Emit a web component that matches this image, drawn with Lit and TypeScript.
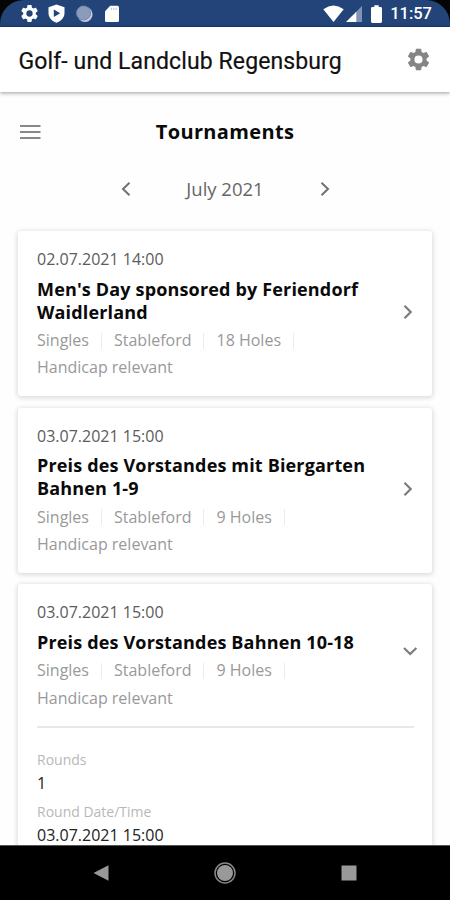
import { LitElement, html, css, svg, nothing } from "lit";
import { customElement, property } from "lit/decorators.js";

interface Detail {
  label: string;
  value: string;
}
interface Tournament {
  date: string;
  title: string;
  tags: string[];
  details?: Detail[];
}

const TOURNAMENTS: Tournament[] = [
  {
    date: "02.07.2021 14:00",
    title: "Men's Day sponsored by Feriendorf Waidlerland",
    tags: ["Singles", "Stableford", "18 Holes", "Handicap relevant"],
  },
  {
    date: "03.07.2021 15:00",
    title: "Preis des Vorstandes mit Biergarten Bahnen 1-9",
    tags: ["Singles", "Stableford", "9 Holes", "Handicap relevant"],
  },
  {
    date: "03.07.2021 15:00",
    title: "Preis des Vorstandes Bahnen 10-18",
    tags: ["Singles", "Stableford", "9 Holes", "Handicap relevant"],
    details: [
      { label: "Rounds", value: "1" },
      { label: "Round Date/Time", value: "03.07.2021 15:00" },
    ],
  },
];

const gear = svg`<path fill="currentColor" fill-rule="evenodd" d="M19.14 12.94c.04-.3.06-.61.06-.94 0-.32-.02-.64-.07-.94l2.03-1.58c.18-.14.23-.41.12-.61l-1.92-3.32c-.12-.22-.37-.29-.59-.22l-2.39.96c-.5-.38-1.03-.7-1.62-.94l-.36-2.54c-.04-.24-.24-.41-.48-.41h-3.84c-.24 0-.43.17-.47.41l-.36 2.54c-.59.24-1.13.57-1.62.94l-2.39-.96c-.22-.08-.47 0-.59.22L2.74 8.87c-.12.21-.08.47.12.61l2.03 1.58c-.05.3-.09.63-.09.94s.02.64.07.94l-2.03 1.58c-.18.14-.23.41-.12.61l1.92 3.32c.12.22.37.29.59.22l2.39-.96c.5.38 1.03.7 1.62.94l.36 2.54c.05.24.24.41.48.41h3.84c.24 0 .44-.17.47-.41l.36-2.54c.59-.24 1.13-.56 1.62-.94l2.39.96c.22.08.47 0 .59-.22l1.92-3.32c.12-.22.07-.47-.12-.61l-2.01-1.58zM12 15.6A3.6 3.6 0 1 1 12 8.4a3.6 3.6 0 0 1 0 7.2z"/>`;

@customElement("status-bar")
export class StatusBar extends LitElement {
  static styles = css`
    :host { display: block; background: #050505; flex: none; }
    .bar {
      height: 27px; box-sizing: border-box; background: #234479; color: #fff;
      border-radius: 24px 24px 0 0; border-bottom: 1px solid #1b3a72;
      display: flex; align-items: center; padding: 1px 18px 0 19px;
    }
    svg { display: block; flex: none; }
    .left { display: flex; align-items: center; gap: 9px; }
    .right { display: flex; align-items: center; margin-left: auto; }
    .shield { margin-left: -1px; }
    .moon { margin-left: 1px; }
    .card { margin-left: 1px; }
    .signal { margin-left: 2px; }
    .battery { margin-left: 9px; }
    .time { font: 500 16.5px/20px Roboto, sans-serif; margin-left: 8px; padding-top: 1px; }
  `;
  render() {
    return html`<div class="bar">
      <div class="left">
        <svg width="21" height="21" viewBox="0 0 24 24">${gear}</svg>
        <svg class="shield" width="17" height="19" viewBox="0 0 17 19">
          <path fill="#fff" fill-rule="evenodd" d="M8.5 0.5 L16.5 3.3 V9 C16.5 13.5 13 17.5 8.5 18.7 C4 17.5 0.5 13.5 0.5 9 V3.3 Z M5.8 5.5 V13 L12.2 9.2 Z"/>
        </svg>
        <svg class="moon" width="19" height="18" viewBox="0 0 19 18">
          <circle cx="10" cy="9.3" r="7.6" fill="#c4cddc"/>
          <circle cx="8.6" cy="8" r="7" fill="#8b9cbb"/>
          <circle cx="8.6" cy="8" r="7" fill="none" stroke="#7389ae" stroke-width="1"/>
        </svg>
        <svg class="card" width="16" height="18" viewBox="0 0 16 18">
          <path fill="#fff" d="M6.2 0.8 H13.4 Q15 .8 15 2.4 V15.4 Q15 17 13.4 17 H2.6 Q1 17 1 15.4 V6.2 Z"/>
          <path stroke="#b4c1d6" stroke-width="1" d="M7.3 2.8 V5 M9.8 2.8 V5 M12.2 2.8 V5"/>
        </svg>
      </div>
      <div class="right">
        <svg width="21" height="18" viewBox="0 0 21 18"><path fill="#fff" d="M0.3 4.2 Q10.5 -3 20.7 4.2 L10.5 17 Z"/></svg>
        <svg class="signal" width="16" height="18" viewBox="0 0 16 18">
          <path fill="#7f93b6" d="M16 1 V17 H9 V8 Z"/><path fill="#fff" d="M10.3 6.7 V17 H0 Z"/>
        </svg>
        <svg class="battery" width="11" height="18" viewBox="0 0 11 18">
          <path fill="#fff" d="M3.3 .3 H7.7 V2 H9.6 Q11 2 11 3.4 V16.6 Q11 18 9.6 18 H1.4 Q0 18 0 16.6 V3.4 Q0 2 1.4 2 H3.3 Z"/>
        </svg>
        <span class="time">11:57</span>
      </div>
    </div>`;
  }
}

@customElement("tournament-card")
export class TournamentCard extends LitElement {
  @property({ attribute: false }) item!: Tournament;

  static styles = css`
    :host {
      display: block; background: #fff; border-radius: 3px; padding: 17px 18px 14px 19px;
      box-shadow: 0 1px 5px 1px rgba(0, 0, 0, 0.14);
    }
    .head { display: flex; align-items: center; }
    .info { width: 350px; flex: none; }
    .date { font-size: 16px; line-height: 22px; color: #5c5c5c; }
    .title { font-size: 18px; line-height: 23px; font-weight: 700; color: #0a0a0a; margin: 7.5px 0 3.4px; letter-spacing: 0.16px; }
    .tags { display: flex; flex-wrap: wrap; font-size: 16px; line-height: 27.5px; color: #999; }
    .tag { display: flex; align-items: center; }
    .tag:not(:last-child)::after { content: ""; width: 1px; height: 16px; background: #ebebeb; margin: 0 12px; }
    .chevron { display: block; margin: 0 -4px 5px auto; color: #7c7c7c; }
    .chevron.open { margin-bottom: 12px; margin-right: -5px; }
    .details { border-top: 2px solid #e8e8e8; margin-top: 14px; padding-top: 20.5px; }
    .label { font-size: 14px; line-height: 21px; color: #b8b8b8; }
    .value { font-size: 16px; line-height: 21px; color: #222; margin: 3px 0 7.5px; }
  `;
  render() {
    const t = this.item;
    return html`
      <div class="head">
        <div class="info">
          <div class="date">${t.date}</div>
          <div class="title">${t.title}</div>
          <div class="tags">${t.tags.map((x) => html`<span class="tag">${x}</span>`)}</div>
        </div>
        <svg class=${t.details ? "chevron open" : "chevron"} width="18" height="18" viewBox="0 0 18 18">
          <path fill="none" stroke="currentColor" stroke-width="2.2" d=${t.details ? "M3 6 L9.2 12 L15.4 6" : "M4.5 2.7 L10.7 9 L4.5 15.3"} />
        </svg>
      </div>
      ${t.details
        ? html`<div class="details">
            ${t.details.map((d) => html`<div class="label">${d.label}</div><div class="value">${d.value}</div>`)}
          </div>`
        : nothing}
    `;
  }
}

@customElement("app-root")
export class AppRoot extends LitElement {
  static styles = css`
    :host {
      display: flex; flex-direction: column; width: 450px; height: 900px; overflow: hidden;
      background: #fefefe; font-family: "Open Sans", sans-serif;
    }
    svg { display: block; flex: none; }
    .appbar {
      height: 65px; flex: none; display: flex; align-items: center; justify-content: space-between;
      padding: 0 19px; box-sizing: border-box; background: #fff; z-index: 1;
      box-shadow: 0 1px 4px rgba(0, 0, 0, 0.4);
    }
    .club { font: 400 23px/30px Roboto, sans-serif; color: #111; padding-top: 5px; letter-spacing: 0.11px; -webkit-text-stroke: 0.2px #111; margin-left: -0.5px; }
    .settings { color: #858585; margin-right: -1px; }
    main { flex: 1; min-height: 0; overflow: hidden; }
    .heading { display: grid; grid-template-columns: 21px 1fr 21px; align-items: center; padding: 0 20px; height: 30px; margin-top: 25px; }
    .heading h1 { text-align: center; font-size: 20px; line-height: 28px; font-weight: 700; color: #0a0a0a; letter-spacing: 0.35px; margin: -1px 0 0; }
    .month { display: flex; align-items: center; justify-content: center; gap: 54.5px; height: 30px; margin-top: 27px; color: #666; font-size: 18.5px; }
    .month span { margin: -2px 0 0 0; }
    .list { display: flex; flex-direction: column; gap: 11.8px; padding: 0 18px; margin-top: 27px; }
    .nav {
      height: 55px; flex: none; background: #000; display: flex; align-items: center; justify-content: space-between;
      padding: 0 93px 0 93px; box-sizing: border-box; border-top: 1px solid #555; z-index: 1;
    }
  `;
  render() {
    return html`
      <status-bar></status-bar>
      <header class="appbar">
        <div class="club">Golf- und Landclub Regensburg</div>
        <svg class="settings" width="27" height="27" viewBox="0 0 24 24">${gear}</svg>
      </header>
      <main>
        <div class="heading">
          <svg width="21" height="16" viewBox="0 0 21 16"><path stroke="#888" stroke-width="2" d="M0 2 H20.5 M0 8 H20.5 M0 14 H20.5" /></svg>
          <h1>Tournaments</h1>
        </div>
        <div class="month">
          <svg width="12" height="16" viewBox="0 0 12 16"><path fill="none" stroke="#707070" stroke-width="2" d="M9.5 1.8 L3 8 L9.5 14.2" /></svg>
          <span>July 2021</span>
          <svg width="12" height="16" viewBox="0 0 12 16"><path fill="none" stroke="#707070" stroke-width="2" d="M3.5 1.8 L10 8 L3.5 14.2" /></svg>
        </div>
        <div class="list">
          ${TOURNAMENTS.map((t) => html`<tournament-card .item=${t}></tournament-card>`)}
        </div>
      </main>
      <nav class="nav">
        <svg width="16" height="16" viewBox="0 0 16 16"><path fill="#999" d="M0.5 8 L15.5 0.3 V15.7 Z" /></svg>
        <svg width="22" height="22" viewBox="0 0 22 22"><circle cx="11" cy="11" r="8" fill="#999" /><circle cx="11" cy="11" r="10" fill="none" stroke="#888" stroke-width="1.5" /></svg>
        <svg width="16" height="16" viewBox="0 0 16 16"><rect x="0.5" y="0.5" width="15" height="15" fill="#999" /></svg>
      </nav>
    `;
  }
}
